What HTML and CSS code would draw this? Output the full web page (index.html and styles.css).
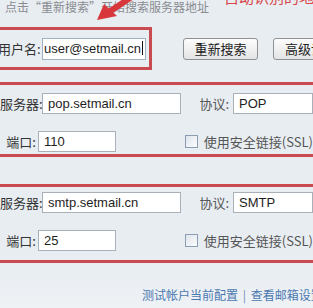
FILE: index.html
```html
<!DOCTYPE html>
<html lang="zh-CN">
<head>
  <meta charset="UTF-8" />
  <meta name="viewport" content="width=device-width, initial-scale=1.0" />
  <title>服务器设置</title>
  <link rel="stylesheet" href="styles.css">
</head>
<body>
  <div class="panel">
    <div class="hint">点击“重新搜索”开始搜索服务器地址</div>
    <div class="note">自动识别的地址</div>
    <svg class="arrow" width="46" height="24" viewBox="0 0 46 24">
      <path d="M44 -6 L17 12" stroke="#d8373c" stroke-width="6" stroke-linecap="round" fill="none"/>
      <path d="M5 20 L12 4 L25 16 Z" fill="#d8373c"/>
    </svg>

    <div class="search-row">
      <div class="mark user-box">
        <span class="field-label">用户名:</span>
        <div class="input user-input">user@setmail.cn<span class="caret"></span></div>
      </div>
      <button class="btn">重新搜索</button>
      <button class="btn btn-adv">高级设置</button>
    </div>

    <!-- 收信服务器 -->
    <div class="mark server-box pop-box">
      <div class="row">
        <span class="field-label">服务器:</span>
        <div class="input host">pop.setmail.cn</div>
        <span class="proto-label">协议:</span>
        <div class="input select">POP</div>
      </div>
      <div class="row">
        <span class="field-label">端口:</span>
        <div class="input port">110</div>
        <span class="check"></span>
        <span class="check-label">使用安全链接(SSL)</span>
      </div>
    </div>

    <!-- 发信服务器 -->
    <div class="mark server-box smtp-box">
      <div class="row">
        <span class="field-label">服务器:</span>
        <div class="input host">smtp.setmail.cn</div>
        <span class="proto-label">协议:</span>
        <div class="input select">SMTP</div>
      </div>
      <div class="row">
        <span class="field-label">端口:</span>
        <div class="input port">25</div>
        <span class="check"></span>
        <span class="check-label">使用安全链接(SSL)</span>
      </div>
    </div>

    <div class="links">
      <a href="#">测试帐户当前配置</a>
      <span class="sep">|</span>
      <a href="#">查看邮箱设置</a>
    </div>
  </div>
</body>
</html>
```

FILE: styles.css
```css
body {
  margin: 0;
  font-family: "Noto Sans CJK SC", "Liberation Sans", sans-serif;
  color: #2a2a2a;
  background: #e8edf2;
  overflow: hidden;
}

.panel {
  position: relative;
  width: 313px;
  height: 308px;
  overflow: hidden;
  background: linear-gradient(180deg, #e8edf2 0%, #e8edf2 84%, #eef2f5 100%);
}

.hint {
  height: 14px;
  padding-left: 5px;
  font-size: 12px;
  line-height: 14px;
  color: #8a8c90;
  white-space: nowrap;
}

/* 红色标注 */
.note {
  position: absolute;
  top: -11px;
  left: 224px;
  font-size: 15px;
  line-height: 15px;
  color: #d9474b;
  white-space: nowrap;
}

.arrow {
  position: absolute;
  top: 0;
  left: 92px;
}

.mark {
  border: 3px solid #c94a4f;
  box-sizing: border-box;
}

.search-row {
  display: flex;
  align-items: center;
  margin-top: 13px;
  white-space: nowrap;
}

.user-box {
  display: flex;
  align-items: center;
  height: 43px;
  margin-left: -8px;
  padding: 0 3px;
}

.field-label {
  display: inline-block;
  width: 42px;
  padding-right: 2px;
  box-sizing: border-box;
  text-align: right;
  font-size: 13px;
  line-height: 21px;
  color: #333;
  white-space: nowrap;
  direction: rtl;
  unicode-bidi: plaintext;
}

.user-box .field-label {
  width: 44px;
}

.input {
  height: 21px;
  box-sizing: border-box;
  border: 1px solid #a9b0b8;
  background: #fff;
  font-family: "Liberation Sans", sans-serif;
  font-size: 13px;
  line-height: 19px;
  padding-left: 5px;
  color: #1e1e1e;
  overflow: hidden;
  white-space: nowrap;
}

.user-input {
  width: 104px;
  height: 22px;
  line-height: 20px;
  padding-left: 4px;
  text-indent: -3px;
  border-color: #9fb0c0;
}

.caret {
  display: inline-block;
  width: 1px;
  height: 14px;
  margin-left: 1px;
  background: #111;
  vertical-align: -2px;
}

.btn {
  width: 75px;
  height: 22px;
  margin-left: 31px;
  padding: 0;
  border: 1px solid #8f9193;
  border-radius: 3px;
  background: linear-gradient(180deg, #fdfdfd 0%, #f0f0f0 50%, #e4e4e4 100%);
  font-family: "Noto Sans CJK SC", sans-serif;
  font-size: 13px;
  color: #222;
  flex-shrink: 0;
}

.btn-adv {
  margin-left: 15px;
  text-align: left;
  padding-left: 11px;
}

.server-box {
  border-left: none;
  border-right: none;
}

.pop-box {
  margin-top: 12px;
  padding: 8px 0 2px;
}

.smtp-box {
  margin-top: 27px;
  padding: 5px 0 9px;
}

.row {
  display: flex;
  align-items: center;
  height: 21px;
  white-space: nowrap;
}

.row + .row {
  margin-top: 17px;
}

.host {
  width: 153px;
}

.port {
  width: 86px;
}

.proto-label {
  margin-left: 18px;
  font-size: 13px;
  color: #555;
}

.select {
  width: 80px;
  margin-left: 4px;
  flex-shrink: 0;
}

.check {
  width: 11px;
  height: 11px;
  margin-left: 69px;
  border: 1px solid #8b9db3;
  background: linear-gradient(135deg, #dfe5ec, #fbfcfd);
  flex-shrink: 0;
}

.check-label {
  margin-left: 6px;
  font-size: 13px;
  color: #555;
}

.links {
  margin-top: 25px;
  padding-left: 142px;
  font-size: 12px;
  line-height: 13px;
  white-space: nowrap;
  color: #4a78b0;
}

.links a {
  color: #4a78b0;
  text-decoration: none;
}

.sep {
  margin: 0 2px;
  color: #6f8fb5;
}
```
